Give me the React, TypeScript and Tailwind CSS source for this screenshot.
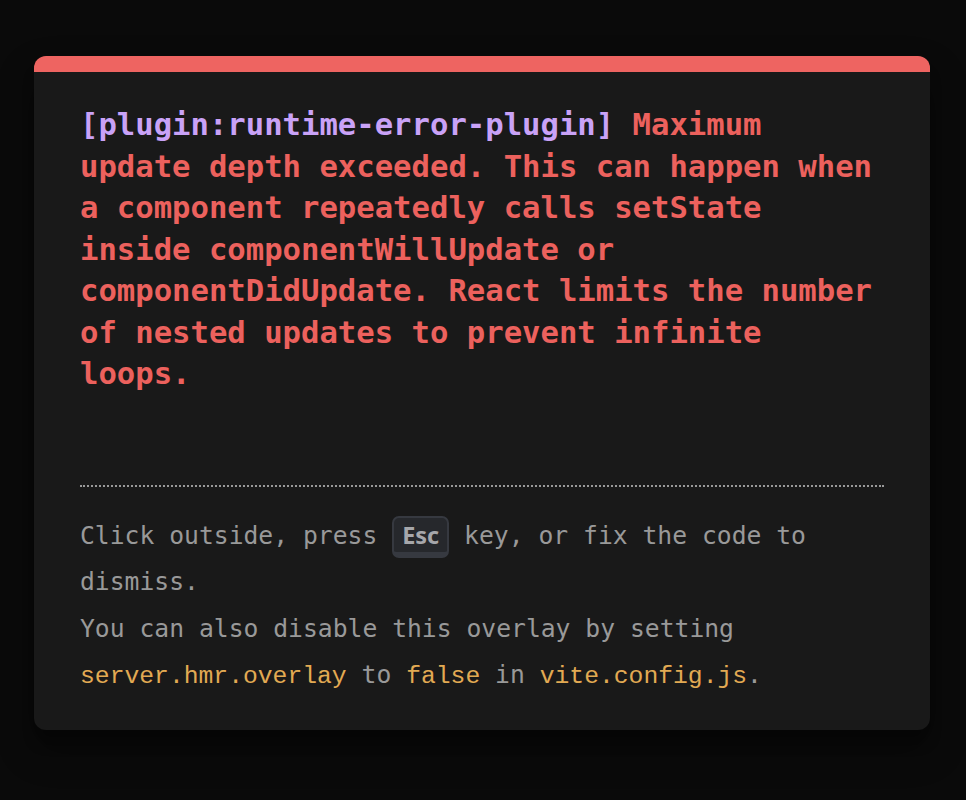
import React from 'react';

const mono = { fontFamily: '"DejaVu Sans Mono", "Liberation Mono", monospace' };

export default function App() {
    return (
        <div className="min-h-screen bg-[#0a0a0a] pt-[56px]" style={mono}>
            <div className="ml-[34px] w-[896px] rounded-[12px] border-t-[16px] border-[#ee6461] bg-[#191919] px-[46px] pt-[32px] pb-[30px] shadow-[0_19px_38px_rgba(0,0,0,0.3),0_15px_12px_rgba(0,0,0,0.22)]">
                <div className="whitespace-pre-wrap text-[30.6px] leading-[41.5px] font-bold text-[#ec615d]">
                    <span className="text-[#c9a2f7]">[plugin:runtime-error-plugin]</span> Maximum update depth exceeded. This can happen when a component repeatedly calls setState inside componentWillUpdate or componentDidUpdate. React limits the number of nested updates to prevent infinite loops.
                </div>

                <div className="mt-[90.5px] border-t-2 border-dotted border-[#999999] pt-[25.8px] text-[24.7px] leading-[46.5px] text-[#999999]">
                    Click outside, press{' '}
                    <kbd
                        className="inline-block rounded-[7px] border-2 border-b-[6px] border-[#363940] bg-[#26282c] px-[8px] py-[2px] text-[23.5px] leading-[30px] font-bold text-[#a6a7ab]"
                        style={{ fontFamily: '"Noto Sans", "Open Sans", sans-serif' }}
                    >
                        Esc
                    </kbd>{' '}
                    key, or fix the code to dismiss.
                    <br />
                    You can also disable this overlay by setting{' '}
                    <code className="text-[#e2aa53]">server.hmr.overlay</code> to{' '}
                    <code className="text-[#e2aa53]">false</code> in{' '}
                    <code className="text-[#e2aa53]">vite.config.js</code>.
                </div>
            </div>
        </div>
    );
}
